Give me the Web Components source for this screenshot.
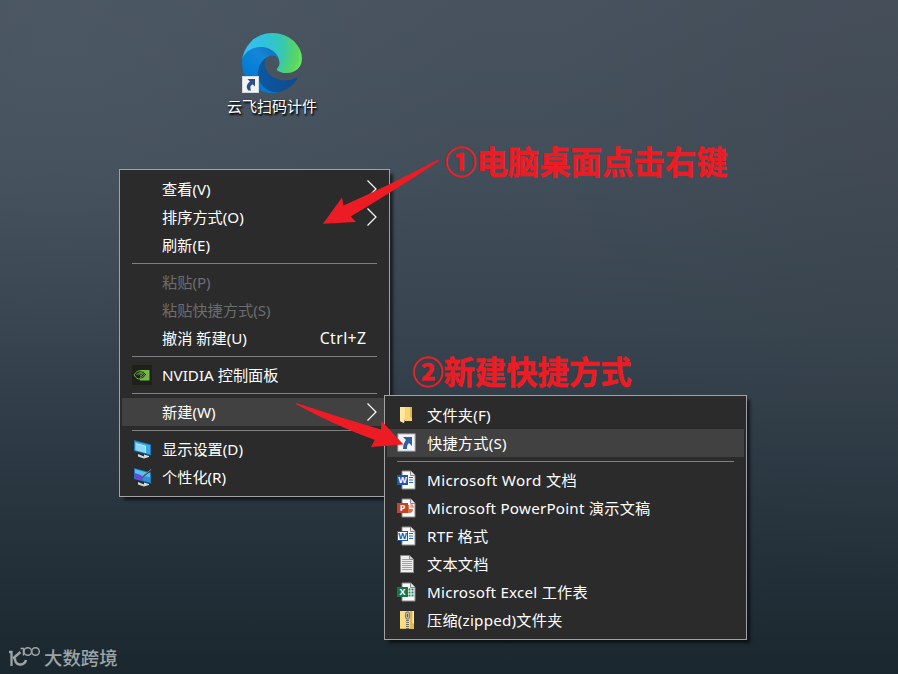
<!DOCTYPE html>
<html lang="zh-CN">
<head>
<meta charset="utf-8">
<title>Desktop</title>
<style>
html, body {
	margin: 0;
	width: 898px;
	height: 674px;
	overflow: hidden;
}
</style>
</head>
<body>
<desktop-screen>
	<desktop-shortcut style="left: 217px; top: 33px">云飞扫码计件</desktop-shortcut>

	<context-menu style="left: 119px; top: 169px; width: 271px">
		<menu-item arrow>查看(V)</menu-item>
		<menu-item arrow>排序方式(O)</menu-item>
		<menu-item>刷新(E)</menu-item>
		<menu-line></menu-line>
		<menu-item disabled>粘贴(P)</menu-item>
		<menu-item disabled>粘贴快捷方式(S)</menu-item>
		<menu-item hint="Ctrl+Z">撤消 新建(U)</menu-item>
		<menu-line></menu-line>
		<menu-item icon="nvidia">NVIDIA 控制面板</menu-item>
		<menu-line></menu-line>
		<menu-item arrow active>新建(W)</menu-item>
		<menu-line></menu-line>
		<menu-item icon="display">显示设置(D)</menu-item>
		<menu-item icon="personal">个性化(R)</menu-item>
	</context-menu>

	<context-menu style="left: 384px; top: 395px; width: 363px; letter-spacing: .22px">
		<menu-item icon="folder">文件夹(F)</menu-item>
		<menu-item icon="shortcut" active>快捷方式(S)</menu-item>
		<menu-line></menu-line>
		<menu-item icon="word" style="letter-spacing: .36px">Microsoft Word 文档</menu-item>
		<menu-item icon="powerpoint">Microsoft PowerPoint 演示文稿</menu-item>
		<menu-item icon="rtf">RTF 格式</menu-item>
		<menu-item icon="text">文本文档</menu-item>
		<menu-item icon="excel">Microsoft Excel 工作表</menu-item>
		<menu-item icon="zip">压缩(zipped)文件夹</menu-item>
	</context-menu>

	<step-note num="1" style="left: 445px; top: 141px">电脑桌面点击右键</step-note>
	<step-note num="2" style="left: 412px; top: 351px">新建快捷方式</step-note>
	<step-arrows></step-arrows>
	<brand-mark style="left: 8px; top: 644px">大数跨境</brand-mark>
</desktop-screen>

<script>
const html = String.raw;

function makeTemplate(markup) {
	const template = document.createElement('template');
	template.innerHTML = markup;
	return template;
}

class BaseElement extends HTMLElement {
	constructor() {
		super();
		this.attachShadow({ mode: 'open' });
		this.shadowRoot.appendChild(this.constructor.template.content.cloneNode(true));
	}
}

// White sheet with a folded corner, shared by the document icons
const sheet = html`
<path d="M5 1h9l4 4v14H5z" fill="#fbfbfb" stroke="#8b8b8b"/>
<path d="M13.500 1v4.500H18" fill="#e4e4e4" stroke="#8b8b8b"/>`;

function officeIcon(letter, color, detail, style = 'filled') {
	const fill = style === 'filled' ? color : '#fff';
	const ink = style === 'filled' ? '#fff' : color;
	return html`${sheet}${detail}
<rect x=".5" y="5.500" width="10" height="9" fill="${fill}" stroke="${color}"/>
<text x="5.500" y="13.200" text-anchor="middle" font-family="Open Sans, sans-serif" font-weight="700" font-size="9" letter-spacing="0" fill="${ink}">${letter}</text>`;
}

const monitor = html`
<path d="M6 15l6 2.500v-2l5 1.500v1l-5 1.500-6-2z" fill="#cfdbe3"/>
<path d="M2 1l17 4.500v11L2 12z" fill="#1a79b8"/>`;

const icons = {
	nvidia: html`
		<rect width="20" height="20" fill="#1d211a"/>
		<path d="M8 5h9.500v10.500H8z" fill="#76b94a"/>
		<path d="M2 10c2-3.500 4-4.200 6-4.200 3 0 5 1.700 6.500 3.700-2 3-4 4.500-6.500 4.500S4 13 2 10z" fill="#1d211a" stroke="#76b94a"/>
		<path d="M4.500 10c1.200-2.300 5-3.500 8-.500-1 2-2.500 2.800-4.500 2.800M6.500 10c1-1.500 3-1.700 4-.500-1 1.300-2 1.500-2.500 1" fill="none" stroke="#76b94a"/>`,
	display: html`${monitor}
		<path d="M3 2.300l15 4v9L3 11.200z" fill="#39ace6"/>
		<path d="M3.500 4.500l10 2.500v7L3.500 11.200z" fill="#8ed6f6"/>
		<path d="M3.500 4.500l10 2.500v7" fill="none" stroke="#d3f0fb" stroke-width=".8"/>`,
	personal: html`${monitor}
		<path d="M3 2.300l15 4v9L3 11.200z" fill="#2d91dd"/>
		<path d="M3 5l6 2 2 6.400-8-2.200z" fill="#7640df"/>
		<path d="M3 2.300l15 4v4L11 9 3 6z" fill="#58bff0"/>
		<path d="M10 10.500L19.500 2.500" stroke="#354045" stroke-width="1.600"/>
		<path d="M10 10L19 2.400" stroke="#8e9998" stroke-width=".7"/>`,
	folder: html`
		<path d="M3 2h8v13l4 1v-14h-5" fill="#e0b64d"/>
		<path d="M3 2h5v12l-1 4-4-2z" fill="#ffe493"/>
		<path d="M8 2h5v10l2 1v3H8z" fill="#f8d475"/>
		<path d="M3 3l4 2v13l-4-2z" fill="#ffe8a2"/>`,
	shortcut: html`
		<rect x="1" y="1" width="17" height="17" fill="#f4f5f6" stroke="#b8bcc0"/>
		<path d="M6 4h9v9l-3-3c-2 2-2 3-2 6H6c0-4 1-6 3-9z" fill="#315f9f"/>`,
	word: officeIcon('W', '#1b57b5', html`<path d="M12 7.500h4M12 10h4M12 12.500h4" stroke="#2668bd" stroke-width="1.200"/>`),
	rtf: officeIcon('W', '#1b57b5', html`<path d="M12 7.500h4M12 10h4M12 12.500h4" stroke="#2668bd" stroke-width="1.200"/>`, 'outlined'),
	powerpoint: officeIcon('P', '#c64225', html`
		<path d="M12 7a4 4 0 1 0 4 4h-4z" fill="#df6d51"/>
		<path d="M13.300 6v3.700H17A3.700 3.700 0 0 0 13.300 6z" fill="#ef927b"/>`),
	excel: officeIcon('X', '#16764a', html`
		<path d="M11.500 7.500h2m1 0h2m-5 3h2m1 0h2m-5 3h2m1 0h2" stroke="#26835a" stroke-width="1.800"/>`),
	text: html`
		<path d="M3.500 1.500h9l4 4v13h-13z" fill="#eee" stroke="#898989"/>
		<path d="M12.500 1.500v4h4" fill="#ddd" stroke="#898989"/>
		<path d="M5 5.500h7M5 7.500h10M5 9.500h10M5 11.500h10M5 13.500h10M5 15.500h10" stroke="#a2a2a2"/>`,
	zip: html`
		<path d="M3 1h14v18H3z" fill="#e1b74d"/>
		<path d="M3 1h10v17H3z" fill="#fbdc80"/>
		<path d="M15.500 1v12l1.500 1V1z" fill="#fff0b7"/>
		<path d="M10.500 1v18" stroke="#6b6a5c" stroke-width="3"/>
		<path d="M10.500 1v18" stroke="#d4d4ca" stroke-width="3" stroke-dasharray="1 1"/>
		<rect x="8.500" y="2" width="4" height="7" rx="1.500" fill="#b8b8b1" stroke="#77776e"/>
		<path d="M10.500 4v3" stroke="#55554f"/>`
};

class DesktopScreen extends BaseElement {
	static template = makeTemplate(html`
<style>
:host {
	display: block;
	position: relative;
	width: 898px;
	height: 674px;
	overflow: hidden;
	font: 15px/28px "Noto Sans", "Noto Sans CJK SC", sans-serif;
	color: #fff;
	background:
		radial-gradient(ellipse 360px 420px at 898px 170px, rgba(58, 61, 68, .28), transparent),
		radial-gradient(ellipse 420px 300px at 60px 60px, rgba(84, 98, 110, .35), transparent),
		linear-gradient(180deg, #47525e 0%, #424e5a 25%, #37444f 50%, #26333d 78%, #1a272e 100%);
}
</style>
<slot></slot>`);
}

class DesktopShortcut extends BaseElement {
	static template = makeTemplate(html`
<style>
:host {
	position: absolute;
	display: flex;
	flex-direction: column;
	align-items: center;
	width: 110px;
}
.picture {
	display: block;
	width: 60px;
	height: 60px;
	overflow: visible;
}
.label {
	font-family: "Noto Sans CJK SC", sans-serif;
	line-height: 25px;
	text-shadow: 1px 1px 2px #000, 1px 2px 2px rgba(0, 0, 0, .7);
}
</style>
<svg class="picture" viewBox="0 0 60 60">
	<defs>
		<linearGradient id="deep" gradientUnits="userSpaceOnUse" x1="63" y1="177" x2="241" y2="177">
			<stop stop-color="#0c59a4"/><stop offset="1" stop-color="#114a8b"/>
		</linearGradient>
		<linearGradient id="blue" gradientUnits="userSpaceOnUse" x1="157" y1="98" x2="46" y2="220">
			<stop stop-color="#1074c4"/><stop offset=".3" stop-color="#1587d6"/><stop offset=".67" stop-color="#0680d7"/><stop offset="1" stop-color="#0078d4"/>
		</linearGradient>
		<radialGradient id="aqua" gradientUnits="userSpaceOnUse" cx="28" cy="65" r="240">
			<stop stop-color="#35c1f1"/><stop offset=".3" stop-color="#2fc2df"/><stop offset=".62" stop-color="#36c7b3"/><stop offset=".9" stop-color="#5bd75a"/><stop offset="1" stop-color="#66eb6e"/>
		</radialGradient>
	</defs>
	<g transform="scale(.234) translate(-4.600 -4.600)">
		<path fill="url(#deep)" d="M235.680 195.460a93.730 93.730 0 0 1-10.540 4.710 101.870 101.870 0 0 1-35.900 6.460c-47.320 0-88.540-32.550-88.540-74.320a31.480 31.480 0 0 1 16.430-27.420c-42.800 1.800-53.800 46.400-53.800 72.530 0 73.880 68.090 81.370 82.760 81.370 7.910 0 19.840-2.300 27-4.560l1.310-.440a128.340 128.340 0 0 0 66.600-52.800 4 4 0 0 0-5.320-5.530z"/>
		<path fill="url(#blue)" d="M110.340 246.340A79.200 79.200 0 0 1 87.600 225a80.720 80.720 0 0 1 29.530-120c3.120-1.470 8.450-4.130 15.540-4a32.350 32.350 0 0 1 25.690 13 31.880 31.880 0 0 1 6.360 18.660c0-.21 24.460-79.600-80-79.600-43.900 0-80 41.660-80 78.210a130.150 130.150 0 0 0 12.110 56 128 128 0 0 0 156.380 67.110 75.550 75.550 0 0 1-62.780-8z"/>
		<path fill="url(#aqua)" d="M156.940 153.780c-.81 1.050-3.300 2.500-3.300 5.660 0 2.610 1.700 5.120 4.720 7.230 14.380 10 41.490 8.680 41.560 8.680a59.560 59.560 0 0 0 30.270-8.350 61.380 61.380 0 0 0 30.430-52.880c.26-22.410-8-37.310-11.340-43.910C228.090 28.760 182.350 4.630 132.610 4.630a128 128 0 0 0-128 126.200c.48-36.540 36.800-66.050 80-66.050 3.500 0 23.460.34 42 10.070 16.340 8.580 24.900 18.940 30.850 29.210 6.180 10.670 7.280 24.150 7.280 29.520s-2.740 13.330-7.800 20.200z"/>
	</g>
	<rect x=".5" y="43.500" width="16" height="16" fill="#f1f3f5" stroke="#d5d9dc"/>
	<path d="M5.500 46H13v7.500l-2.500-2.300C8 53 8 54 9 57.500H6.300C3.800 54 4.500 51.500 8 48.600z" fill="#2c4f8c"/>
</svg>
<span class="label"><slot></slot></span>`);
}

class ContextMenu extends BaseElement {
	static template = makeTemplate(html`
<style>
:host {
	position: absolute;
	box-sizing: border-box;
	display: flex;
	flex-direction: column;
	padding: 5px 2px;
	border: 1px solid #a0a2a3;
	background-color: #2b2b2b;
	box-shadow: 4px 4px 3px -1px rgba(0, 0, 0, .6);
	font-size: 15.200px;
}
</style>
<slot></slot>`);
}

class MenuItem extends BaseElement {
	static template = makeTemplate(html`
<style>
:host {
	box-sizing: border-box;
	display: flex;
	align-items: center;
	height: 28px;
	padding: 0 5px 0 10px;
}
:host([active]) {
	background-color: #414141;
}
:host([disabled]) {
	color: #6d6d6d;
}
.icon {
	flex: none;
	width: 20px;
	height: 20px;
	margin-right: 10px;
}
.label {
	flex: 1;
	white-space: nowrap;
}
.hint {
	margin-right: 15.500px;
	font-size: 15.800px;
	letter-spacing: .4px;
}
.arrow {
	display: none;
	width: 11px;
	height: 18px;
	margin-right: 5px;
	fill: none;
	stroke: #fff;
	stroke-width: 1.200;
}
:host([arrow]) .arrow {
	display: block;
}
</style>
<svg class="icon" viewBox="0 0 20 20"></svg>
<span class="label"><slot></slot></span>
<span class="hint"></span>
<svg class="arrow" viewBox="0 0 11 18"><path d="M1.500 .5L10 9l-8.500 8.500"/></svg>`);

	connectedCallback() {
		const hint = this.shadowRoot.querySelector('.hint');
		this.shadowRoot.querySelector('.icon').innerHTML = icons[this.getAttribute('icon')] || '';
		if (this.hasAttribute('hint')) {
			hint.textContent = this.getAttribute('hint');
		}
		else {
			hint.remove();
		}
	}
}

class MenuLine extends BaseElement {
	static template = makeTemplate(html`
<style>
:host {
	display: block;
	height: 1px;
	margin: 4px 10px;
	background-color: #808080;
}
</style>`);
}

class StepNote extends BaseElement {
	static template = makeTemplate(html`
<style>
:host {
	position: absolute;
	display: flex;
	align-items: center;
	height: 40px;
	color: #ed1c24;
	font: 700 31.400px/40px "Noto Sans CJK SC", sans-serif;
	-webkit-text-stroke: .5px #ed1c24;
	white-space: nowrap;
}
</style>
<span class="num"></span><slot></slot>`);

	connectedCallback() {
		this.shadowRoot.querySelector('.num').textContent = ['①', '②'][this.getAttribute('num') - 1];
	}
}

class StepArrows extends BaseElement {
	static template = makeTemplate(html`
<style>
:host {
	position: absolute;
	inset: 0;
	pointer-events: none;
}
svg {
	display: block;
	fill: #ed1c24;
}
</style>
<svg width="898" height="674">
	<path d="M323 223.700L342 197.500l1.500 8Q388 186 438 159.500l1 1.500Q400 187 350.700 216.500l5.300 5.500z"/>
	<path d="M403.500 444.500L381.500 421l-.5 8.500Q338 417 296.500 403l-.5 1.300Q336 426 374.700 440l-3.700 7z"/>
</svg>`);
}

class BrandMark extends BaseElement {
	static template = makeTemplate(html`
<style>
:host {
	position: absolute;
	display: flex;
	align-items: center;
	gap: 3px;
	height: 26px;
	color: #9da3a6;
	font: 500 18.400px/24px "Noto Sans CJK SC", sans-serif;
}
svg {
	fill: none;
	stroke: currentColor;
	stroke-width: 1.500;
}
</style>
<svg width="33" height="24" viewBox="0 0 33 24">
	<path d="M1 7h2.500v14" stroke-width="2.300"/>
	<path d="M12.500 7L5 13.500M7 13a5.500 5.500 0 0 0 11 2" stroke-width="2.500"/>
	<path d="M12.500 3.500h3v7"/>
	<ellipse cx="19.800" cy="6.500" rx="3.800" ry="3.800"/>
	<ellipse cx="27.500" cy="6.500" rx="3.800" ry="3.800"/>
</svg>
<slot></slot>`);
}

customElements.define('desktop-screen', DesktopScreen);
customElements.define('desktop-shortcut', DesktopShortcut);
customElements.define('context-menu', ContextMenu);
customElements.define('menu-item', MenuItem);
customElements.define('menu-line', MenuLine);
customElements.define('step-note', StepNote);
customElements.define('step-arrows', StepArrows);
customElements.define('brand-mark', BrandMark);
</script>
</body>
</html>
